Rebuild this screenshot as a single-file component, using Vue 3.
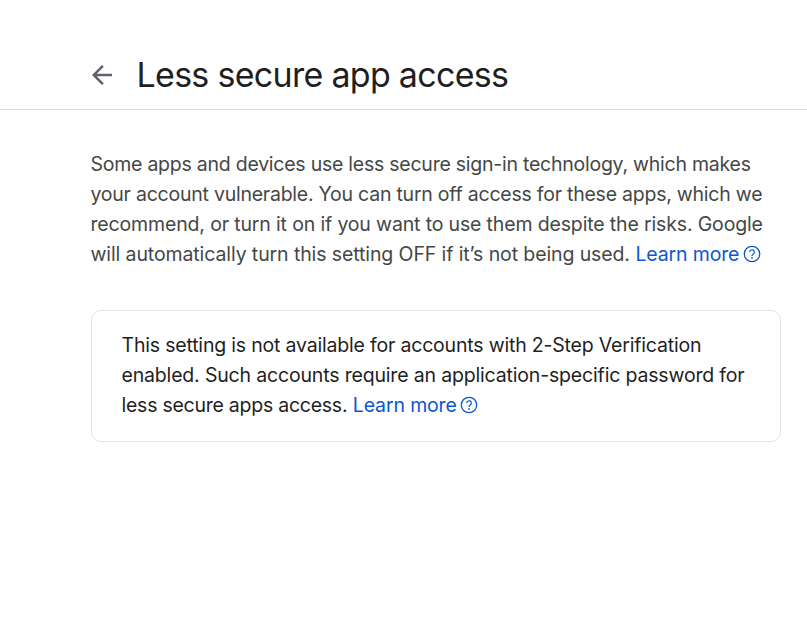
<script setup>
const intro = [
  { text: 'Some apps and devices use less secure sign-in technology, which makes', spacing: -0.245 },
  { text: 'your account vulnerable. You can turn off access for these apps, which we', spacing: -0.235 },
  { text: 'recommend, or turn it on if you want to use them despite the risks. Google', spacing: -0.15 },
  { text: 'will automatically turn this setting OFF if it’s not being used.', spacing: -0.105, link: true },
]
const notice = [
  { text: 'This setting is not available for accounts with 2-Step Verification', spacing: -0.19 },
  { text: 'enabled. Such accounts require an application-specific password for', spacing: -0.17 },
  { text: 'less secure apps access.', spacing: -0.25, link: true },
]
const blocks = [
  { name: 'intro', lines: intro },
  { name: 'notice', lines: notice },
]
</script>

<template>
  <div class="page">
    <header class="header">
      <svg class="back" viewBox="0 0 24 24" width="30" height="30" aria-label="Back">
        <path d="M20 11H7.83l5.59-5.59L12 4l-8 8 8 8 1.41-1.41L7.83 13H20v-2z" fill="#5f6368" />
      </svg>
      <h1 class="title">Less secure app access</h1>
    </header>
    <main class="content">
      <section v-for="block in blocks" :key="block.name" :class="block.name">
        <div v-for="line in block.lines" :key="line.text" class="line">
          <span :style="{ letterSpacing: line.spacing + 'px' }">{{ line.text }}</span>
          <a v-if="line.link" class="link">
            <span>Learn more</span>
            <svg class="help" viewBox="0 0 18 18" width="18" height="18">
              <circle cx="9" cy="9" r="7.7" fill="none" stroke="currentColor" stroke-width="1.3" />
              <path d="M6.7 7.1a2.3 2.3 0 1 1 3.9 1.6c-.8.75-1.6 1.1-1.6 2.2" fill="none" stroke="currentColor" stroke-width="1.2" />
              <circle cx="9" cy="12.9" r=".85" fill="currentColor" />
            </svg>
          </a>
        </div>
      </section>
    </main>
  </div>
</template>

<style>
body { background: #fff; }
</style>

<style scoped>
.page {
  min-height: 624px;
  font-family: Inter, Roboto, sans-serif;
  color: #1f1f1f;
}
.header {
  display: flex;
  align-items: center;
  box-sizing: border-box;
  height: 110px;
  padding: 40px 0 0 87px;
  border-bottom: 1px solid #dadce0;
}
.back { flex: none; }
.title {
  margin: 0 0 0 19.5px;
  font-size: 34px;
  line-height: 44px;
  font-weight: 400;
  letter-spacing: -0.71px;
  white-space: nowrap;
}
.content {
  padding: 39px 26px 0 90px;
  font-size: 19.5px;
  line-height: 30px;
}
.intro { color: #444746; }
.notice {
  box-sizing: border-box;
  height: 132px;
  margin: 41px 0 0 1px;
  padding: 19px 29px;
  border: 1px solid #e0e2e5;
  border-radius: 10px;
}
.line {
  display: flex;
  align-items: center;
  height: 30px;
  padding-left: 0.5px;
  white-space: nowrap;
}
.link {
  display: flex;
  align-items: center;
  margin-left: 5.5px;
  color: #0b57d0;
  letter-spacing: -0.14px;
}
.help { margin-left: 3.25px; }
</style>
